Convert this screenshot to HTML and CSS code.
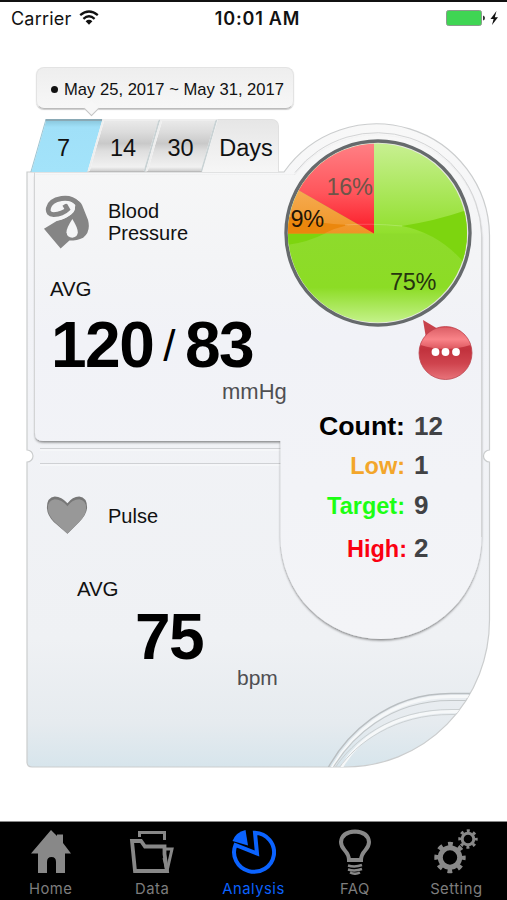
FILE: index.html
```html
<!DOCTYPE html>
<html lang="en">
<head>
    <meta charset="UTF-8">
    <meta name="viewport" content="width=device-width, initial-scale=1.0">
    <title>Analysis</title>
    <link rel="stylesheet" href="styles.css">
</head>
<body>
    <div class="app">
        <header class="status">
            <div class="carrier">Carrier
                <svg width="20" height="16" viewBox="0 0 20 16">
                    <g fill="none" stroke="#111" stroke-width="2.3">
                        <path d="M1.2 5.2Q10-2.2 18.8 5.2"/>
                        <path d="M4.4 8.8Q10 3.8 15.6 8.8"/>
                    </g>
                    <path d="M6.6 11.2Q10 8.3 13.4 11.2L10 14.8Z" fill="#111"/>
                </svg>
            </div>
            <div class="time">10:01 AM</div>
            <svg class="battery" width="53" height="18" viewBox="0 0 53 18">
                <rect x="0.5" y="1.5" width="35" height="15" rx="2" fill="#3fd553" stroke="#8b9a8c"/>
                <path d="M37 6.5q2 .5 2 2.5t-2 2.5Z" fill="#333"/>
                <path d="M50.5 2L44.5 10H47.6L46 16L52 8.2H48.8Z" fill="#111"/>
            </svg>
        </header>

        <main class="main">
            <div class="range"><span class="dot"></span>May 25, 2017 ~ May 31, 2017</div>

            <div class="tabs">
                <div class="tab active"><span>7</span></div>
                <div class="tab t14"><span>14</span></div>
                <div class="tab"><span>30</span></div>
                <div class="tab days"><span>Days</span></div>
            </div>

            <div class="card">
                <svg class="card-bg" width="480" height="660" viewBox="20 115 480 660">
                    <defs>
                        <linearGradient id="shell" x1="0" y1="0" x2="0" y2="1">
                            <stop offset="0" stop-color="#f8f8f8"/>
                            <stop offset="0.3" stop-color="#f2f3f7"/>
                            <stop offset="0.8" stop-color="#eff1f4"/>
                            <stop offset="0.93" stop-color="#e6ebef"/>
                            <stop offset="1" stop-color="#d7e5ec"/>
                        </linearGradient>
                        <linearGradient id="panel" x1="0" y1="0" x2="0" y2="1">
                            <stop offset="0" stop-color="#f7f7f7"/>
                            <stop offset="0.25" stop-color="#f3f4f6"/>
                            <stop offset="0.4" stop-color="#f1f2f7"/>
                            <stop offset="1" stop-color="#f3f4f7"/>
                        </linearGradient>
                        <filter id="drop" x="-5%" y="-5%" width="110%" height="110%">
                            <feDropShadow dx="0" dy="1.5" stdDeviation="1.3" flood-color="#000" flood-opacity="0.45"/>
                        </filter>
                        <clipPath id="shellClip">
                            <path d="M27 172H284A113 113 0 0 1 489.5 235V620A144 147 0 0 1 345 767H32Q27 767 27 762Z"/>
                        </clipPath>
                    </defs>
                    <path d="M27 172H284A113 113 0 0 1 489.5 235V450A6 6 0 0 0 489.5 462V620A144 147 0 0 1 345 767H32Q27 767 27 762V462A6 6 0 0 0 27 450Z" fill="url(#shell)" stroke="#cbcdce" stroke-width="1.2"/>
                    <g stroke="#cfd1d4">
                        <path d="M40 448.5H281M40 463.5H281"/>
                        <path d="M40 450H281M40 465H281" stroke="#fafbfc"/>
                    </g>
                    <g clip-path="url(#shellClip)" fill="none">
                        <path d="M331 770C349 737 388 696.5 452 696.5H489M340 770C356 740 392 712 452 711.5H489" stroke="#f6f8f9" stroke-width="3"/>
                        <path d="M328 768C345 737 385 693 452 693.5H489" stroke="#b9bec1" stroke-width="1.4"/>
                        <path d="M333 768C350 739 388 700 452 700.5H489" stroke="#c3c8ca" stroke-width="1.2"/>
                        <path d="M335 768C352 742 390 709 452 709.5H489M339 768C356 744 394 714 452 714.5H489" stroke="#cbd0d2"/>
                    </g>
                    <path d="M35 175H295A104.5 104.5 0 0 1 481.5 236V537A100.5 102 0 0 1 280.5 537V441H43Q35 441 35 433Z" fill="url(#panel)" filter="url(#drop)"/>
                    <path d="M34.5 172.5V433M295 172.5A104.5 104.5 0 0 1 481.5 234V537" fill="none" stroke="#d3d4d5"/>
                </svg>

                <div class="readings">
                    <section class="reading bp">
                        <div class="reading-head">
                            <svg width="47" height="54" viewBox="0 0 48 54">
                                <path d="M1 34L14 26Q24 24 31 17Q35 10 31 3Q38 5 40 10L46 25Q49 37 41 43Q35 46 27 46L18 54Z" fill="#858585"/>
                                <path d="M35 8Q29 1.5 19 3Q7 5 5.500 13Q4.500 19 11 19.500Q20 19 25 14L22 9" fill="none" stroke="#858585" stroke-width="5"/>
                                <path d="M9 16Q10 9 19 7.500Q28 6 31 10Q33 14 28 18.500Q21 24 10 25" fill="none" stroke="#f4f5f6" stroke-width="2.4"/>
                                <path d="M30 24Q24 33 24 37.5Q24.5 43 30 43Q35.5 42.5 35.5 37.5Q35.5 33 30 24Z" fill="#f4f5f6"/>
                            </svg>
                            <h2>Blood<br>Pressure</h2>
                        </div>
                        <div class="avg">AVG</div>
                        <div class="value">120<span class="slash">/</span>83</div>
                        <div class="unit">mmHg</div>
                    </section>
                    <section class="reading pulse">
                        <div class="reading-head">
                            <svg width="47" height="42" viewBox="0 0 48 42">
                                <path d="M25 8Q19 1 12 1Q4 2 4 12Q4 20 11 27L25 39L37 27Q45 19 45 12Q45 2 37 1Q30 1 25 8Z" fill="#777"/>
                                <path d="M25 11Q19 4 12 4Q5 5 5 13Q5 20 12 27L25 39L37 27Q44 20 44 13Q44 5 37 4Q30 4 25 11Z" fill="#989898"/>
                            </svg>
                            <h2>Pulse</h2>
                        </div>
                        <div class="avg">AVG</div>
                        <div class="value">75</div>
                        <div class="unit">bpm</div>
                    </section>
                </div>

                <aside class="summary">
                    <svg class="pie" width="192" height="192" viewBox="282 137 192 192">
                        <defs>
                            <linearGradient id="greenTop" x1="0" y1="143" x2="0" y2="234" gradientUnits="userSpaceOnUse">
                                <stop offset="0" stop-color="#c8f092"/>
                                <stop offset="1" stop-color="#91df2c"/>
                            </linearGradient>
                            <linearGradient id="greenLow" x1="0" y1="234" x2="0" y2="323" gradientUnits="userSpaceOnUse">
                                <stop offset="0" stop-color="#8edb2c"/>
                                <stop offset="0.6" stop-color="#8cdc25"/>
                                <stop offset="1" stop-color="#c5f28b"/>
                            </linearGradient>
                            <linearGradient id="red" x1="0" y1="143" x2="0" y2="234" gradientUnits="userSpaceOnUse">
                                <stop offset="0" stop-color="#ff8085"/>
                                <stop offset="0.55" stop-color="#ff555b"/>
                                <stop offset="1" stop-color="#fb1825"/>
                            </linearGradient>
                            <linearGradient id="orange" x1="0" y1="190" x2="0" y2="234" gradientUnits="userSpaceOnUse">
                                <stop offset="0" stop-color="#f6ab50"/>
                                <stop offset="1" stop-color="#ef9425"/>
                            </linearGradient>
                            <clipPath id="disc"><circle cx="377.5" cy="233" r="89.5"/></clipPath>
                        </defs>
                        <circle cx="378" cy="233" r="92" fill="#e6e8e1" stroke="#666a6c" stroke-width="3.4"/>
                        <g clip-path="url(#disc)">
                            <rect x="286" y="140" width="184" height="94" fill="url(#greenTop)"/>
                            <rect x="286" y="233.5" width="184" height="92" fill="url(#greenLow)"/>
                            <path d="M402 226Q436 221 470 209V270Q443 234 402 226Z" fill="#7dd50f"/>
                            <path d="M286 233H326Q306 243 286 245Z" fill="#7dd50f"/>
                            <path d="M374 233.5L286 183V233.5Z" fill="url(#orange)"/>
                            <path d="M286 216Q318 224 348 225Q335 228 324 233.5H286Z" fill="#eb870d"/>
                            <path d="M374 233.5L286 183V140H374Z" fill="url(#red)"/>
                            <path d="M345 225Q370 223 402 226" fill="none" stroke="#fff" stroke-opacity="0.2"/>
                        </g>
                        <g class="pie-labels">
                            <text x="326.5" y="195" fill="#6e5548">16%</text>
                            <text x="290.5" y="227" fill="#221405">9%</text>
                            <text x="390" y="290" fill="#26340f">75%</text>
                        </g>
                    </svg>
                    <svg class="comment" width="56" height="63" viewBox="0 0 56 63">
                        <defs>
                            <linearGradient id="bubble" x1="0" y1="0" x2="0" y2="1">
                                <stop offset="0" stop-color="#d8434d"/>
                                <stop offset="0.45" stop-color="#c2333e"/>
                                <stop offset="0.7" stop-color="#cf444e"/>
                                <stop offset="1" stop-color="#e8737a"/>
                            </linearGradient>
                            <linearGradient id="shine" x1="0" y1="0" x2="0" y2="1">
                                <stop offset="0" stop-color="#dc6067"/>
                                <stop offset="0.55" stop-color="#f98388"/>
                                <stop offset="1" stop-color="#dd5860"/>
                            </linearGradient>
                        </defs>
                        <path d="M5 1L20 10L8 19Z" fill="#c8424b"/>
                        <circle cx="27.5" cy="34" r="26.5" fill="url(#bubble)" stroke="#bd4650" stroke-width="0.8"/>
                        <path d="M2.5 26Q9 8.5 27.5 8.5T52.5 26Q40 30 27.5 30T2.5 26Z" fill="url(#shine)"/>
                        <g fill="#fff"><circle cx="17.5" cy="33" r="3.9"/><circle cx="27.5" cy="33" r="3.9"/><circle cx="38" cy="33" r="3.9"/></g>
                    </svg>
                    <div class="counts">
                        <div class="row count"><span>Count:</span><b>12</b></div>
                        <div class="row low"><span>Low:</span><b>1</b></div>
                        <div class="row target"><span>Target:</span><b>9</b></div>
                        <div class="row high"><span>High:</span><b>2</b></div>
                    </div>
                </aside>
            </div>
        </main>

        <nav class="nav">
            <a>
                <svg width="44" height="46" viewBox="0 0 44 46" fill="#888">
                    <path d="M22 1L28 7V5.5H34V14L42 24.5H36V44H27V33Q27 28 22.5 28T18 33V44H9V24.5H2Z"/>
                </svg>
                Home
            </a>
            <a>
                <svg width="46" height="46" viewBox="0 0 46 46" fill="none" stroke="#888">
                    <path d="M10.5 8V3.5H35.5V11" stroke-width="3"/>
                    <path d="M3 12H12L16 17.5H35.5V25L38 42H6Z" stroke-width="3.8"/>
                    <path d="M35 20H43L38 42L35 29" stroke-width="3"/>
                </svg>
                Data
            </a>
            <a class="current">
                <svg width="46" height="46" viewBox="0 0 46 46">
                    <path d="M25 3.8A20 19.5 0 1 1 5.5 16L27 24.5Z" fill="none" stroke="#0b63ff" stroke-width="4"/>
                    <path d="M2.5 12Q6 3 15.5 1L18 16.5Z" fill="#0b63ff"/>
                </svg>
                Analysis
            </a>
            <a>
                <svg width="34" height="46" viewBox="0 0 34 46" fill="none" stroke="#888">
                    <path d="M11 31Q11 26 6.5 21Q3 17 3 13Q4 3 17 2.5Q30 3 31 13Q31 17 27.5 21Q23 26 23 31Z" stroke-width="4"/>
                    <path d="M10 36.5Q17 38.5 24 36M10 40.5Q17 42.5 24 40M12 43.5Q17 46 22 43.5" stroke-width="2.5"/>
                </svg>
                FAQ
            </a>
            <a>
                <svg width="46" height="46" viewBox="0 0 46 46" fill="none" stroke="#888">
                    <circle cx="17" cy="28.5" r="9.7" stroke-width="5"/>
                    <circle cx="17" cy="28.5" r="13.5" stroke-width="4.4" stroke-dasharray="4.8 5.803" stroke-dashoffset="2.4"/>
                    <circle cx="35" cy="10" r="5.8" stroke-width="3"/>
                    <circle cx="35" cy="10" r="8.2" stroke-width="3" stroke-dasharray="3 3.44" stroke-dashoffset="1.5"/>
                </svg>
                Setting
            </a>
        </nav>
    </div>
</body>
</html>
```

FILE: styles.css
```css
* { box-sizing: border-box; }
body { margin: 0; background: #fff; font-family: "Liberation Sans", Arial, sans-serif; color: #111; }
.app { width: 507px; height: 900px; display: flex; flex-direction: column; overflow: hidden; }

.status { height: 36px; border-top: 2px solid #111; display: grid; grid-template-columns: 1fr auto 1fr; align-items: center; padding: 0 8px 2px 11px; font-family: Inter, sans-serif; font-size: 18px; }
.carrier { display: flex; align-items: center; gap: 8px; letter-spacing: 0.2px; }
.time { font-weight: 600; font-size: 18px; letter-spacing: 0.8px; margin-left: 5px; }
.battery { justify-self: end; }

.main { flex: 1; padding: 31px 17px 0 27px; }
.range { position: relative; width: 258px; height: 42px; margin-left: 9px; padding-left: 15px; display: flex; align-items: center; border-radius: 8px; background: linear-gradient(#eeeeee, #f7f7f7); border: 1px solid #e3e3e3; border-bottom-color: #bbb; box-shadow: 0 1px 1px #ccc; font-size: 16.6px; white-space: nowrap; padding-top: 3px; }
.range::after { content: ""; position: absolute; left: 49px; bottom: -6px; width: 10px; height: 10px; background: #f7f7f7; border: solid #c4c4c4; border-width: 0 1px 1px 0; transform: rotate(45deg); }
.dot { width: 7px; height: 7px; border-radius: 50%; background: #111; margin: 0 6px 0 -1px; }

.tabs { display: flex; margin: 10px 0 0 11px; height: 53px; font-size: 23.5px; }
.tab { position: relative; width: 57px; display: flex; align-items: center; justify-content: center; padding: 5px 6px 0 0; }
.tab span { position: relative; }
.tab::before { content: ""; position: absolute; inset: 0; transform: skewX(-16deg); background: linear-gradient(#e9e9e9, #dcdcdc 22%, #c9c9c9 45%, #dedede 60%, #f1f1f1 92%, #cfcfcf); border: 2px solid #eeeeee; border-right-color: #c9d2d4; border-bottom: 1px solid #bbb; }
.tab.active::before { background: linear-gradient(#8cc9df, #a0e0f8 12%, #a3e3fa); border: 0; border-top: 2px solid #8aa9b5; border-left: 1px solid #9bc4d2; }
.tab.t14 { width: 58px; }
.tab + .tab { padding-right: 2px; }
.tab.days { width: 69px; padding: 5px 0 0 3px; }
.tab.days::before { transform: none; left: -8px; background: linear-gradient(#e6e6e6, #f6f6f6); border: 1px solid #e0e0e0; border-width: 1px 1px 0 0; border-radius: 0 7px 0 0; clip-path: polygon(16px 0, 100% 0, 100% 100%, 0 100%); }

.card { position: relative; display: grid; grid-template-columns: 254px 1fr; height: 595px; }
.card-bg { position: absolute; left: -7px; top: -57px; z-index: -1; }

.reading-head { display: flex; align-items: center; gap: 18px; margin-left: 16px; }
h2 { margin: 0; font-size: 20px; line-height: 22.5px; font-weight: normal; }
.avg { font-size: 20.5px; line-height: 24px; letter-spacing: -0.2px; }
.value { font-size: 64px; line-height: 64px; font-weight: bold; color: #000; white-space: nowrap; letter-spacing: -1.5px; }
.slash { display: inline-block; line-height: 46px; font-size: 44px; font-weight: normal; margin: 0 11px 0 10px; position: relative; top: -6px; }
.unit { font-size: 22px; line-height: 24px; color: #4f4f52; }
.bp { height: 284px; padding-top: 23px; }
.bp .avg { margin: 28px 0 0 23px; }
.bp .value { margin: 12px 0 0 24px; }
.bp .unit { margin: 3px 0 0 195px; }
.pulse { padding-top: 39px; }
.pulse .avg { margin: 40px 0 0 50px; }
.pulse .value { margin: 4px 0 0 108px; }
.pulse .unit { margin: -3px 0 0 210px; font-size: 21px; }

.summary { display: flex; flex-direction: column; }
.pie { margin: -35px 0 0 1px; flex: none; }
.pie-labels { font-size: 23.5px; letter-spacing: -0.3px; }
.comment { margin: -10px 0 0 137px; flex: none; }
.counts { margin-top: 26px; }
.row { display: grid; grid-template-columns: 124px auto; gap: 9px; align-items: baseline; height: 40px; font-weight: bold; font-size: 23.5px; line-height: 36px; }
.row span { text-align: right; }
.row b { color: #414245; font-size: 26px; }
.count { height: 39px; }
.count span { color: #000; font-size: 26.7px; }
.low span { color: #f3a62b; }
.target span { color: #1cff13; }
.high { grid-template-columns: 126px auto; gap: 7px; margin-top: 3px; }
.high span { color: #fb0011; }

.nav { height: 79px; background: #000; border-top: 1px solid #888; display: grid; grid-template-columns: repeat(5, 1fr); font-family: Inter, sans-serif; font-size: 14.8px; letter-spacing: 0.5px; color: #7d7d7d; }
.nav a { display: flex; flex-direction: column; align-items: center; padding-top: 7px; line-height: 18px; }
.nav svg { margin-bottom: 5px; }
.nav .current { color: #0b63ff; }
```
